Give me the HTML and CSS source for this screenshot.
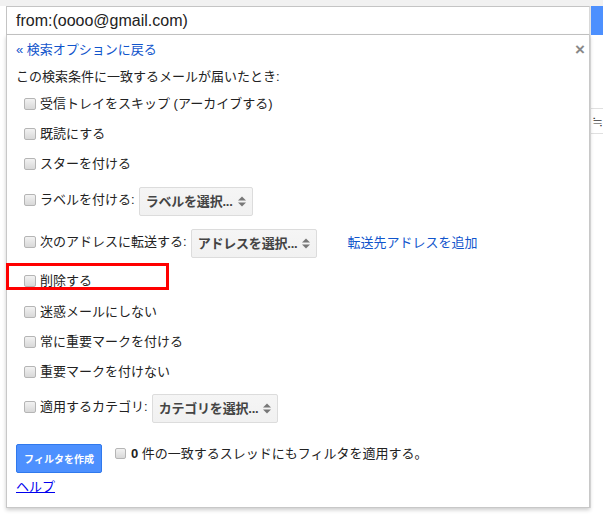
FILE: index.html
```html
<!DOCTYPE html>
<html lang="ja">
<head>
<meta charset="utf-8">
<link rel="stylesheet" href="styles.css">
</head>
<body>
<div class="page">
  <div class="main">
    <div class="search">from:(oooo@gmail.com)</div>
    <div class="panel">
      <div class="back-row">
        <a class="back">« 検索オプションに戻る</a>
        <span class="close">×</span>
      </div>
      <div class="heading">この検索条件に一致するメールが届いたとき:</div>
      <div class="row"><span class="cb"></span><span>受信トレイをスキップ (アーカイブする)</span></div>
      <div class="row"><span class="cb"></span><span>既読にする</span></div>
      <div class="row"><span class="cb"></span><span>スターを付ける</span></div>
      <div class="row row-sel"><span class="cb"></span><span>ラベルを付ける:</span>
        <span class="sel">ラベルを選択...<svg class="arr" width="8" height="11" viewBox="0 0 8 11"><path d="M0 4.5 L4 0.5 L8 4.5Z M0 6.5 L4 10.5 L8 6.5Z" fill="#777"/></svg></span>
      </div>
      <div class="row row-sel"><span class="cb"></span><span>次のアドレスに転送する:</span>
        <span class="sel">アドレスを選択...<svg class="arr" width="8" height="11" viewBox="0 0 8 11"><path d="M0 4.5 L4 0.5 L8 4.5Z M0 6.5 L4 10.5 L8 6.5Z" fill="#777"/></svg></span>
        <a class="link add">転送先アドレスを追加</a>
      </div>
      <div class="row row-del"><span class="cb"></span><span>削除する</span></div>
      <div class="row"><span class="cb"></span><span>迷惑メールにしない</span></div>
      <div class="row"><span class="cb"></span><span>常に重要マークを付ける</span></div>
      <div class="row"><span class="cb"></span><span>重要マークを付けない</span></div>
      <div class="row row-cat"><span class="cb"></span><span>適用するカテゴリ:</span>
        <span class="sel">カテゴリを選択...<svg class="arr" width="8" height="11" viewBox="0 0 8 11"><path d="M0 4.5 L4 0.5 L8 4.5Z M0 6.5 L4 10.5 L8 6.5Z" fill="#777"/></svg></span>
      </div>
      <div class="footer">
        <span class="btn">フィルタを作成</span>
        <span class="cb cb-small"></span>
        <span class="apply"><b>0</b> 件の一致するスレッドにもフィルタを適用する。</span>
      </div>
      <div class="help"><a class="help-link">ヘルプ</a></div>
      <div class="highlight"></div>
    </div>
  </div>
  <div class="side">
    <div class="side-btn"></div>
    <div class="side-box"><span class="side-icon">≒</span></div>
  </div>
</div>
</body>
</html>
```
FILE: styles.css
```css
html, body {
  margin: 0;
  padding: 0;
  background: #fff;
}
body {
  font-family: "Liberation Sans", "Noto Sans CJK JP", sans-serif;
  color: #222;
  font-size: 13px;
  width: 603px;
  height: 516px;
  overflow: hidden;
}
.page {
  display: flex;
  border-top: 6px solid #f1f1f1;
}
.main {
  margin-left: 6px;
  width: 591px;
  position: relative;
}
.search {
  box-sizing: border-box;
  height: 29px;
  border: 1px solid #c4c4c4;
  border-right: 1px solid #d9d9d9;
  padding-left: 9px;
  font-size: 16px;
  line-height: 27px;
  color: #222;
}
.panel {
  position: relative;
  box-sizing: border-box;
  height: 473px;
  border: 1px solid #c8c8c8;
  border-top: none;
  box-shadow: 0 2px 4px rgba(0,0,0,0.2);
  padding: 0 0 0 9px;
  background: #fff;
}
.back-row {
  height: 30px;
  display: flex;
  align-items: center;
  justify-content: space-between;
  padding-right: 4px;
}
.back {
  color: #15c;
  font-size: 13px;
  line-height: 18px;
}
.close {
  color: #888;
  font-size: 17px;
  font-weight: bold;
  line-height: 18px;
}
.heading {
  height: 24px;
  line-height: 24px;
}
.row {
  height: 30px;
  display: flex;
  align-items: center;
  padding-left: 8px;
  line-height: 18px;
  white-space: nowrap;
}
.row-sel { height: 42px; }
.row-del { height: 34px; padding-top: 2px; box-sizing: border-box; }
.row-cat { height: 38px; padding-top: 2px; box-sizing: border-box; }
.cb {
  box-sizing: border-box;
  width: 12px;
  height: 12px;
  border: 1px solid #b5b5b5;
  border-radius: 2px;
  background: linear-gradient(#f2f2f2, #d8d8d8);
  margin-right: 4px;
  flex: none;
}
.sel {
  box-sizing: border-box;
  display: inline-flex;
  align-items: center;
  height: 29px;
  margin-left: 4px;
  padding: 0 6px 0 6px;
  border: 1px solid #dcdcdc;
  border-radius: 2px;
  background: linear-gradient(#f5f5f5, #f1f1f1);
  font-weight: bold;
  color: #444;
  margin-top: 3px;
  white-space: nowrap;
  letter-spacing: -0.2px;
}
.arr { margin-left: 5px; flex: none; }
.link {
  color: #15c;
}
.add { margin-left: 30px; margin-top: 2px; }
.footer {
  margin-top: 19px;
  height: 29px;
  display: flex;
  align-items: center;
}
.btn {
  box-sizing: border-box;
  width: 86px;
  height: 29px;
  display: flex;
  align-items: center;
  justify-content: center;
  background: #4d90fe;
  border: 1px solid #3079ed;
  border-radius: 2px;
  color: #fff;
  font-weight: bold;
  font-size: 10px;
  margin-right: 13px;
}
.cb-small {
  width: 11px;
  height: 11px;
  margin-right: 5px;
  align-self: flex-start;
  margin-top: 4px;
}
.apply {
  align-self: flex-start;
  line-height: 18px;
  margin-top: 1px;
}
.apply b {
  color: #222;
}
.help {
  margin-top: 5px;
  line-height: 18px;
}
.help-link {
  color: #00e;
  text-decoration: underline;
}
.highlight {
  position: absolute;
  left: -1px;
  top: 228px;
  width: 163px;
  height: 27px;
  box-sizing: border-box;
  border: 3px solid #ff0000;
}
.side {
  flex: 1;
  border-left: 1px solid #e4e4e4;
}
.side-btn {
  height: 29px;
  background: #4d90fe;
}
.side-box {
  margin-top: 73px;
  height: 24px;
  border-top: 1px solid #e0e0e0;
  border-bottom: 1px solid #e0e0e0;
  overflow: hidden;
  font-size: 14px;
  line-height: 24px;
  color: #333;
}
.side-icon {
  margin-left: 1px;
}
```
